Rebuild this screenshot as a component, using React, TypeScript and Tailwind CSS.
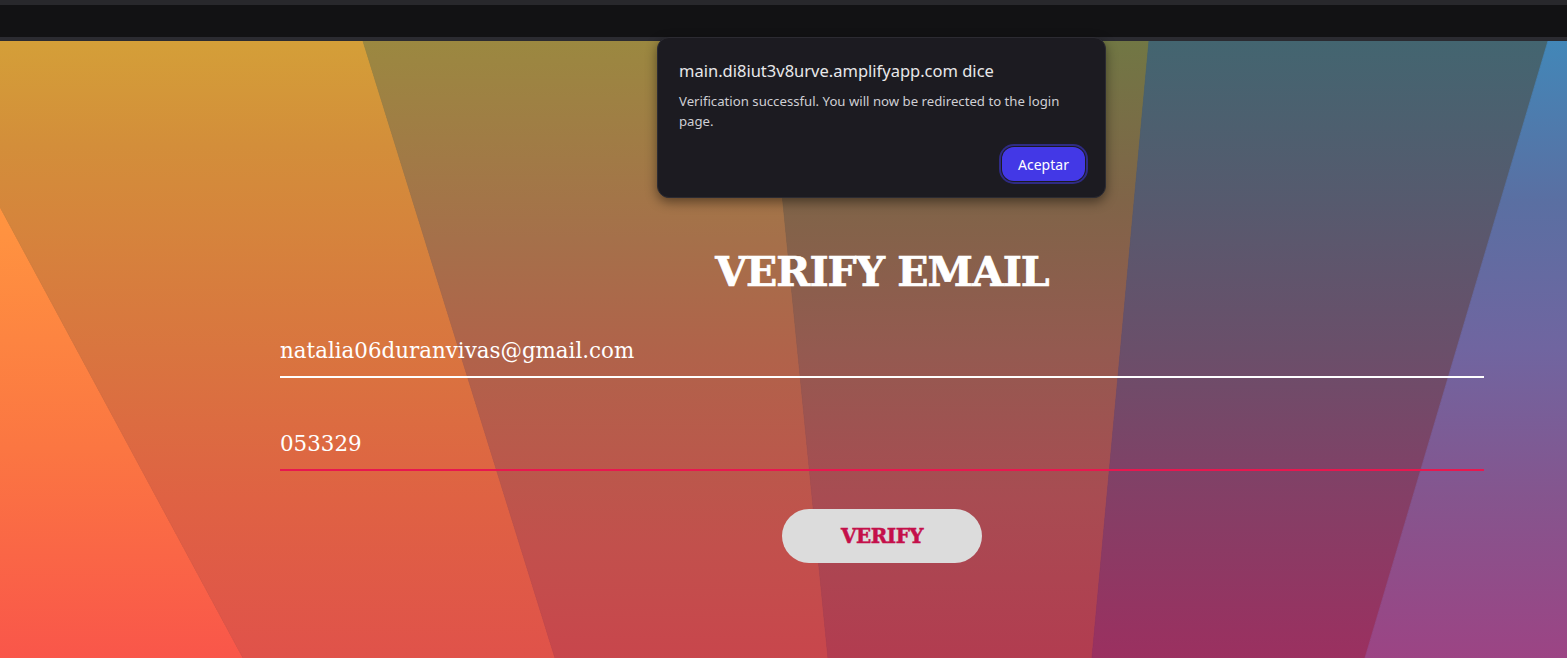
import React from "react";

const stripes = [
    {
        id: "a",
        points: "0,166 243,617 0,617",
        stops: [["0", "#ffa03c"], ["0.31", "#ff9240"], ["0.66", "#fb7642"], ["1", "#f9564a"]],
    },
    {
        id: "b",
        points: "0,0 363,0 555,617 243,617 0,166",
        stops: [["0", "#d49f38"], ["0.17", "#d38e3a"], ["0.5", "#d9753f"], ["0.74", "#df6243"], ["1", "#e0524a"]],
    },
    {
        id: "c",
        points: "363,0 767,0 828,617 555,617",
        stops: [["0", "#9b8840"], ["0.32", "#a5704a"], ["0.5", "#b0634a"], ["0.82", "#c2504c"], ["1", "#c8464c"]],
    },
    {
        id: "d",
        points: "767,0 1149,0 1092,617 828,617",
        stops: [["0", "#717744"], ["0.26", "#806448"], ["0.5", "#945a50"], ["0.74", "#a84c52"], ["1", "#b23c50"]],
    },
    {
        id: "e",
        points: "1149,0 1548,0 1365,617 1092,617",
        stops: [["0", "#436570"], ["0.26", "#565a6e"], ["0.5", "#6a4f6a"], ["0.74", "#843f66"], ["1", "#9b3060"]],
    },
    {
        id: "f",
        points: "1548,0 1567,0 1567,617 1365,617",
        stops: [["0", "#4287b8"], ["0.26", "#5a6fa2"], ["0.5", "#7065a0"], ["0.74", "#85558e"], ["1", "#9c4484"]],
    },
];

function Backdrop() {
    return (
        <svg className="absolute inset-0 h-full w-full" viewBox="0 0 1567 617" preserveAspectRatio="none">
            <defs>
                {stripes.map((s) => (
                    <linearGradient key={s.id} id={`g-${s.id}`} x1="0" y1="0" x2="0" y2="617" gradientUnits="userSpaceOnUse">
                        {s.stops.map(([o, c]) => (
                            <stop key={o} offset={o} stopColor={c} />
                        ))}
                    </linearGradient>
                ))}
            </defs>
            {/* stroke in the same paint so neighbouring stripes don't leave a seam */}
            {stripes.map((s) => (
                <polygon key={s.id} points={s.points} fill={`url(#g-${s.id})`} stroke={`url(#g-${s.id})`} strokeWidth={0.8} />
            ))}
        </svg>
    );
}

function Field({ value, line }: { value: string; line: string }) {
    return (
        <div className={`flex h-[46px] items-center border-b-2 pb-[6px] ${line}`}>
            <span className="text-[21.4px] text-white" style={{ fontFamily: '"DejaVu Serif", serif' }}>{value}</span>
        </div>
    );
}

function Alert() {
    return (
        <div className="absolute left-[657px] top-[37px] flex h-[161px] w-[449px] flex-col rounded-xl border border-[#2c2b32] bg-[#1c1b21] pl-[21px] pr-[20px] pt-[23px] shadow-[0_4px_12px_rgba(0,0,0,0.45)] font-['Noto_Sans',sans-serif]">
            <p className="text-[16.5px] leading-[20px] text-[#e8e8ea]">main.di8iut3v8urve.amplifyapp.com dice</p>
            <p className="mt-[10px] text-[13.2px] leading-[20px] text-[#cfcfd4]">
                Verification successful. You will now be redirected to the login page.
            </p>
            <div className="mt-[16px] flex justify-end">
                <button className="h-[34px] w-[83px] rounded-xl bg-[#4338e6] text-[14px] text-white ring-2 ring-[#2f2b85] ring-offset-1 ring-offset-[#1c1b21]">
                    Aceptar
                </button>
            </div>
        </div>
    );
}

export default function App() {
    return (
        <div className="relative h-[658px] w-full overflow-hidden bg-[#121214]">
            <div className="h-[41px] border-t-[5px] border-b-4 border-t-[#28282c] border-b-[#2b2b31] bg-[#121214]" />
            <main className="relative h-[617px]">
                <Backdrop />
                <div className="relative flex flex-col pl-[280px] pr-[83px] pt-[211px]">
                    <h1
                        className="text-center text-[41px] font-bold leading-[41px] tracking-[-1px] text-white [-webkit-text-stroke:0.7px_white]"
                        style={{ fontFamily: '"DejaVu Serif", serif' }}
                    >
                        VERIFY EMAIL
                    </h1>
                    <div className="mt-[39px]">
                        <Field value="natalia06duranvivas@gmail.com" line="border-white" />
                    </div>
                    <div className="mt-[47px]">
                        <Field value="053329" line="border-[#e8174f]" />
                    </div>
                    <div className="mt-[38px] flex justify-center">
                        <button
                            className="h-[54px] w-[200px] rounded-full bg-[#dcdcdc] text-[20px] font-bold tracking-[-0.5px] text-[#c4104a] [-webkit-text-stroke:0.5px_#c4104a]"
                            style={{ fontFamily: '"DejaVu Serif", serif' }}
                        >
                            VERIFY
                        </button>
                    </div>
                </div>
            </main>
            <Alert />
        </div>
    );
}
